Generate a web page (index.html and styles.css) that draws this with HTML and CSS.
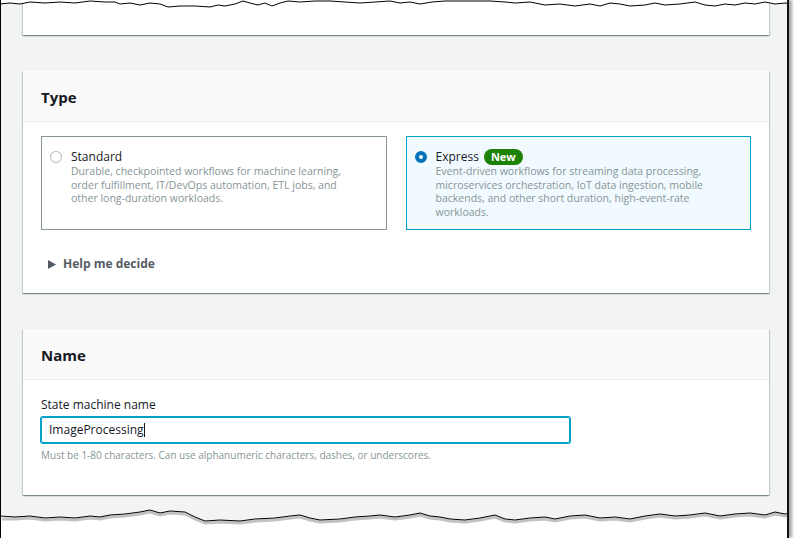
FILE: index.html
```html
<!DOCTYPE html>
<html lang="en">
<head>
    <meta charset="UTF-8">
    <title>Create state machine</title>
    <link rel="stylesheet" href="styles.css">
</head>
<body>
    <div class="frame">
        <div class="page">
            <div class="card card-top"></div>

            <div class="card">
                <div class="card-header">Type</div>
                <div class="card-body">
                    <div class="tiles">
                        <div class="tile">
                            <span class="radio"></span>
                            <div class="tile-text">
                                <div class="tile-title">Standard</div>
                                <div class="tile-desc">Durable, checkpointed workflows for machine learning, order fulfillment, IT/DevOps automation, ETL jobs, and other long-duration workloads.</div>
                            </div>
                        </div>
                        <div class="tile selected">
                            <span class="radio checked"></span>
                            <div class="tile-text">
                                <div class="tile-title">Express <span class="badge">New</span></div>
                                <div class="tile-desc">Event-driven workflows for streaming data processing, microservices orchestration, IoT data ingestion, mobile backends, and other short duration, high-event-rate workloads.</div>
                            </div>
                        </div>
                    </div>
                    <div class="expander">
                        <svg width="8" height="9" viewBox="0 0 8 9"><path d="M0 0 L8 4.5 L0 9 Z" fill="#545b64"/></svg>
                        Help me decide
                    </div>
                </div>
            </div>

            <div class="card">
                <div class="card-header">Name</div>
                <div class="card-body name-body">
                    <label class="field-label">State machine name</label>
                    <div class="input">ImageProcessing<span class="caret"></span></div>
                    <div class="hint">Must be 1-80 characters. Can use alphanumeric characters, dashes, or underscores.</div>
                </div>
            </div>
        </div>

        <!-- torn paper edges -->
        <svg class="edge edge-top" width="800" height="12" viewBox="0 0 800 12">
            <polygon fill="#fff" points="0,0 0,4 10,3 20,4 30,2 45,3 60,2 75,3 90,1 105,2 115,2 120,4 130,3 140,5 150,3 160,4 168,7 180,6 195,6 210,7 218,5 225,6 235,4 243,1 250,3 258,5 265,3 272,6 280,3 288,1 300,2 315,1 330,1 345,2 360,3 375,2 390,1 400,3 410,2 420,4 432,2 445,1 460,1 475,1 490,1 505,2 515,3 530,2 545,5 560,4 575,6 590,4 600,6 610,3 620,4 630,6 645,5 655,3 665,5 680,4 695,2 705,5 715,6 725,4 735,5 745,3 755,4 765,2 775,4 785,3 791,4 800,4 800,0"/>
            <polyline fill="none" stroke="#000" stroke-width="1" points="0,4 10,3 20,4 30,2 45,3 60,2 75,3 90,1 105,2 115,2 120,4 130,3 140,5 150,3 160,4 168,7 180,6 195,6 210,7 218,5 225,6 235,4 243,1 250,3 258,5 265,3 272,6 280,3 288,1 300,2 315,1 330,1 345,2 360,3 375,2 390,1 400,3 410,2 420,4 432,2 445,1 460,1 475,1 490,1 505,2 515,3 530,2 545,5 560,4 575,6 590,4 600,6 610,3 620,4 630,6 645,5 655,3 665,5 680,4 695,2 705,5 715,6 725,4 735,5 745,3 755,4 765,2 775,4 785,3 790,4"/>
        </svg>
        <svg class="edge edge-bottom" width="800" height="38" viewBox="0 500 800 38">
            <polygon fill="#fff" points="0,538 0,516 15,517 30,516 45,518 60,517 75,518 90,516 100,517 110,515 125,514 140,512 150,510 160,513 170,511 185,512 195,517 205,521 220,520 240,521 255,519 275,518 290,516 300,515 310,518 320,520 340,519 355,517 370,516 380,515 395,517 410,515 420,513 430,516 440,517 450,519 465,520 480,518 495,515 505,519 515,520 530,518 545,517 555,519 570,516 585,515 600,518 615,517 630,519 645,516 660,514 675,516 690,515 705,513 720,516 735,514 750,513 765,515 775,512 785,514 792,513 800,513 800,538"/>
            <polyline class="edge-shadow" fill="none" stroke="#999" stroke-width="3" points="2,519 15,519 30,518 45,520 60,519 75,520 90,518 100,519 110,517 125,516 140,514 150,512 160,515 170,513 185,514 195,519 205,523 220,522 240,523 255,521 275,520 290,518 300,517 310,520 320,522 340,521 355,519 370,518 380,517 395,519 410,517 420,515 430,518 440,519 450,521 465,522 480,520 495,517 505,521 515,522 530,520 545,519 555,521 570,518 585,517 600,520 615,519 630,521 645,518 660,516 675,518 690,517 705,515 720,518 735,516 750,515 765,517 775,514 785,516 794,515"/>
            <polyline fill="none" stroke="#000" stroke-width="1" points="0,516 15,517 30,516 45,518 60,517 75,518 90,516 100,517 110,515 125,514 140,512 150,510 160,513 170,511 185,512 195,517 205,521 220,520 240,521 255,519 275,518 290,516 300,515 310,518 320,520 340,519 355,517 370,516 380,515 395,517 410,515 420,513 430,516 440,517 450,519 465,520 480,518 495,515 505,519 515,520 530,518 545,517 555,519 570,516 585,515 600,518 615,517 630,519 645,516 660,514 675,516 690,515 705,513 720,516 735,514 750,513 765,515 775,512 785,514 790,513"/>
        </svg>
    </div>
</body>
</html>
```

FILE: styles.css
```css
body {
    margin: 0;
    background: #fff;
    font-family: "Open Sans", Arial, sans-serif;
    color: #16191f;
}
.frame {
    position: relative;
    width: 786px;
    height: 538px;
    background: #f2f3f3;
    border-left: 1px solid #000;
    border-right: 2px solid #111;
    box-shadow: 3px 0 3px rgba(0,0,0,0.35);
    overflow: hidden;
}
.page {
    padding: 0 18px 0 22px;
}
.card {
    background: #fff;
    margin-bottom: 36px;
    box-shadow: 0 1px 1px 0 rgba(0,28,36,0.3), 1px 1px 1px 0 rgba(0,28,36,0.15), -1px 1px 1px 0 rgba(0,28,36,0.15);
}
.card-top {
    height: 35px;
}
.card-header {
    background: #fafafa;
    border-bottom: 1px solid #eaeded;
    height: 51px;
    box-sizing: border-box;
    padding: 16px 18px 0;
    font-size: 15px;
    font-weight: bold;
    line-height: 20px;
}
.card-body {
    padding: 14px 18px 0;
}
.tiles {
    display: flex;
    gap: 19px;
}
.tile {
    flex: 1;
    height: 94px;
    box-sizing: border-box;
    border: 1px solid #879596;
    display: flex;
    align-items: flex-start;
    gap: 9px;
    padding: 12px 40px 12px 8px;
}
.tile.selected {
    border-color: #00a1c9;
    background: #f1faff;
}
.radio {
    flex: none;
    width: 12px;
    height: 12px;
    box-sizing: border-box;
    border: 1px solid #aab7b8;
    border-radius: 50%;
    background: #fff;
    margin-top: 2px;
}
.radio.checked {
    border: 4px solid #0073bb;
}
.tile-title {
    font-size: 12px;
    line-height: 16px;
    display: flex;
    align-items: center;
    gap: 5px;
}
.badge {
    background: #1d8102;
    color: #fff;
    font-size: 11px;
    font-weight: bold;
    line-height: 16px;
    padding: 0 7px;
    border-radius: 8px;
}
.tile-desc {
    font-size: 10.5px;
    line-height: 13.5px;
    color: #879596;
}
.expander {
    display: flex;
    align-items: center;
    gap: 7px;
    padding: 26px 0 21px 7px;
    font-size: 12px;
    font-weight: bold;
    color: #545b64;
    line-height: 16px;
}
.name-body {
    padding-top: 17px;
    padding-bottom: 33px;
}
.field-label {
    display: block;
    font-size: 12px;
    line-height: 16px;
    margin-bottom: 4px;
}
.input {
    width: 529px;
    height: 26px;
    box-sizing: border-box;
    border: 1px solid #00a1c9;
    box-shadow: 0 0 0 1px #00a1c9;
    border-radius: 2px;
    padding: 0 7px;
    font-size: 12px;
    line-height: 24px;
    display: flex;
    align-items: center;
}
.caret {
    display: inline-block;
    width: 1px;
    height: 14px;
    background: #16191f;
}
.hint {
    font-size: 10px;
    line-height: 14px;
    color: #879596;
    margin-top: 5px;
}
.edge {
    position: absolute;
    left: -1px;
    display: block;
}
.edge-top {
    top: 0;
}
.edge-bottom {
    bottom: 0;
}
.edge-shadow {
    opacity: 0.6;
}
```
